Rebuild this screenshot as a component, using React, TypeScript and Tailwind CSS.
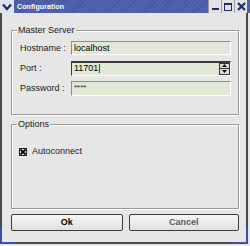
import React from 'react';

const font = "font-['Liberation_Sans',Arial,sans-serif]";

const GroupBox: React.FC<{ title: string; children: React.ReactNode; className?: string }> = ({ title, children, className }) => (
  <div className={`h-[85px] border border-[#9a9a9a] shadow-[inset_1px_1px_0_#ffffff,1px_1px_0_#ffffff] ${className ?? ''}`}>
    <div className="-mt-[6px] ml-[5px] h-[11px] w-fit px-[1px] bg-[#e6e6e6] text-[9px] leading-[11px] text-[#1a1a1a]">
      {title}
    </div>
    {children}
  </div>
);

const Field: React.FC<{ label: string; children: React.ReactNode }> = ({ label, children }) => (
  <div className="flex items-center h-[14px]">
    <span className="w-[51px] text-[9px] leading-[11px] text-[#1a1a1a]">{label}</span>
    {children}
  </div>
);

export default function App() {
  return (
    <div className={`w-[250px] h-[246px] bg-[#e6e6e6] flex flex-col relative ${font}`}>
      {/* title bar */}
      <div className="h-[13px] flex items-stretch bg-[repeating-linear-gradient(135deg,#48579f_0px,#48579f_1px,#5363ab_1px,#5363ab_3px)]">
        <div className="w-[14px] bg-[#dfe2f0] flex items-center justify-center">
          <svg width="10" height="8" viewBox="0 0 10 8">
            <path d="M1 1.5 L5 6 L9 1.5" fill="none" stroke="#1e2a6e" strokeWidth="2.2" />
          </svg>
        </div>
        <div className="pl-[3px] flex items-center text-[7px] font-bold text-white leading-none tracking-[0.1px]">Configuration</div>
        <div className="ml-auto flex mr-[3px]">
          <div className="w-[13px] bg-[#e2e2e2] border-l border-[#9a9a9a] flex items-end justify-center pb-[3px]">
            <div className="w-[7px] h-[2px] bg-[#1e2a6e]" />
          </div>
          <div className="w-[13px] bg-[#e2e2e2] border-l border-[#9a9a9a] flex items-center justify-center">
            <div className="w-[8px] h-[8px] border border-[#1e2a6e] border-t-[2px]" />
          </div>
          <div className="w-[13px] bg-[#e2e2e2] border-l border-[#9a9a9a] flex items-center justify-center">
            <svg width="9" height="9" viewBox="0 0 9 9">
              <path d="M1 1 L8 8 M8 1 L1 8" stroke="#1e2a6e" strokeWidth="2.2" />
            </svg>
          </div>
        </div>
      </div>

      {/* body */}
      <div className="flex-1 mb-[2px] mr-[2px] border-l-2 border-r-2 border-b-2 border-[#4a4a4a] pl-[9px] pr-[7px] flex flex-col">
        <GroupBox title="Master Server" className="mt-[17px]">
          <div className="mt-[5px] pl-[8px] pr-[7px] flex flex-col gap-[6px]">
            <Field label="Hostname :">
              <div className="flex-1 h-[14px] bg-[#e1e9d6] border border-t-[#8c8c8c] border-l-[#8c8c8c] border-b-white border-r-white pl-[2px] text-[9px] leading-[12px] text-black">
                localhost
              </div>
            </Field>
            <Field label="Port :">
              <div className="flex-1 h-[15px] bg-[#e1e9d6] border border-t-2 border-t-[#3a3a3a] border-l-[#3a3a3a] border-b-white border-r-white flex">
                <span className="pl-[2px] text-[9px] leading-[11px] text-black flex-1">
                  11701<span className="font-light">|</span>
                </span>
                <div className="w-[11px] flex flex-col border border-[#333] bg-[#dcdcdc]">
                  <div className="flex-1 flex items-center justify-center border-b border-[#333]">
                    <svg width="5" height="3" viewBox="0 0 5 3"><path d="M0 3 L2.5 0 L5 3 Z" fill="#111" /></svg>
                  </div>
                  <div className="flex-1 flex items-center justify-center">
                    <svg width="5" height="3" viewBox="0 0 5 3"><path d="M0 0 L2.5 3 L5 0 Z" fill="#111" /></svg>
                  </div>
                </div>
              </div>
            </Field>
            <Field label="Password :">
              <div className="flex-1 h-[15px] bg-[#e1e9d6] border border-t-[#8c8c8c] border-l-[#8c8c8c] border-b-white border-r-white pl-[2px] text-[8px] leading-[11px] text-[#222]">
                ****
              </div>
            </Field>
          </div>
        </GroupBox>

        <GroupBox title="Options" className="mt-[9px]">
          <div className="mt-[16px] pl-[7px] flex items-center gap-[5px]">
            <div className="w-[8px] h-[8px] border border-[#222] bg-[#f4f4f4] flex items-center justify-center">
              <svg width="6" height="6" viewBox="0 0 6 6">
                <path d="M0.5 0.5 L5.5 5.5 M5.5 0.5 L0.5 5.5" stroke="#000" strokeWidth="2" />
              </svg>
            </div>
            <span className="text-[9px] leading-[11px] text-[#1a1a1a]">Autoconnect</span>
          </div>
        </GroupBox>

        <div className="mt-[5px] flex gap-[6px]">
          <button className="w-[112px] h-[17px] rounded-[2px] border border-[#3c3c3c] bg-[linear-gradient(#f6f6f6,#e0e0e0)] text-[9px] leading-none font-bold text-black">
            Ok
          </button>
          <button className="w-[111px] h-[17px] rounded-[2px] border border-[#3c3c3c] bg-[linear-gradient(#f6f6f6,#e0e0e0)] text-[9px] leading-none font-bold text-[#5a5a5a]">
            Cancel
          </button>
        </div>
      </div>

      {/* blue frame corners */}
      <div className="absolute left-0 bottom-[2px] w-[16px] h-[16px] border-l-2 border-b-2 border-[#3d4cae] rounded-bl-[2px]" />
      <div className="absolute right-[2px] bottom-[2px] w-[16px] h-[16px] border-r-2 border-b-2 border-[#3d4cae] rounded-br-[2px]" />
    </div>
  );
}
